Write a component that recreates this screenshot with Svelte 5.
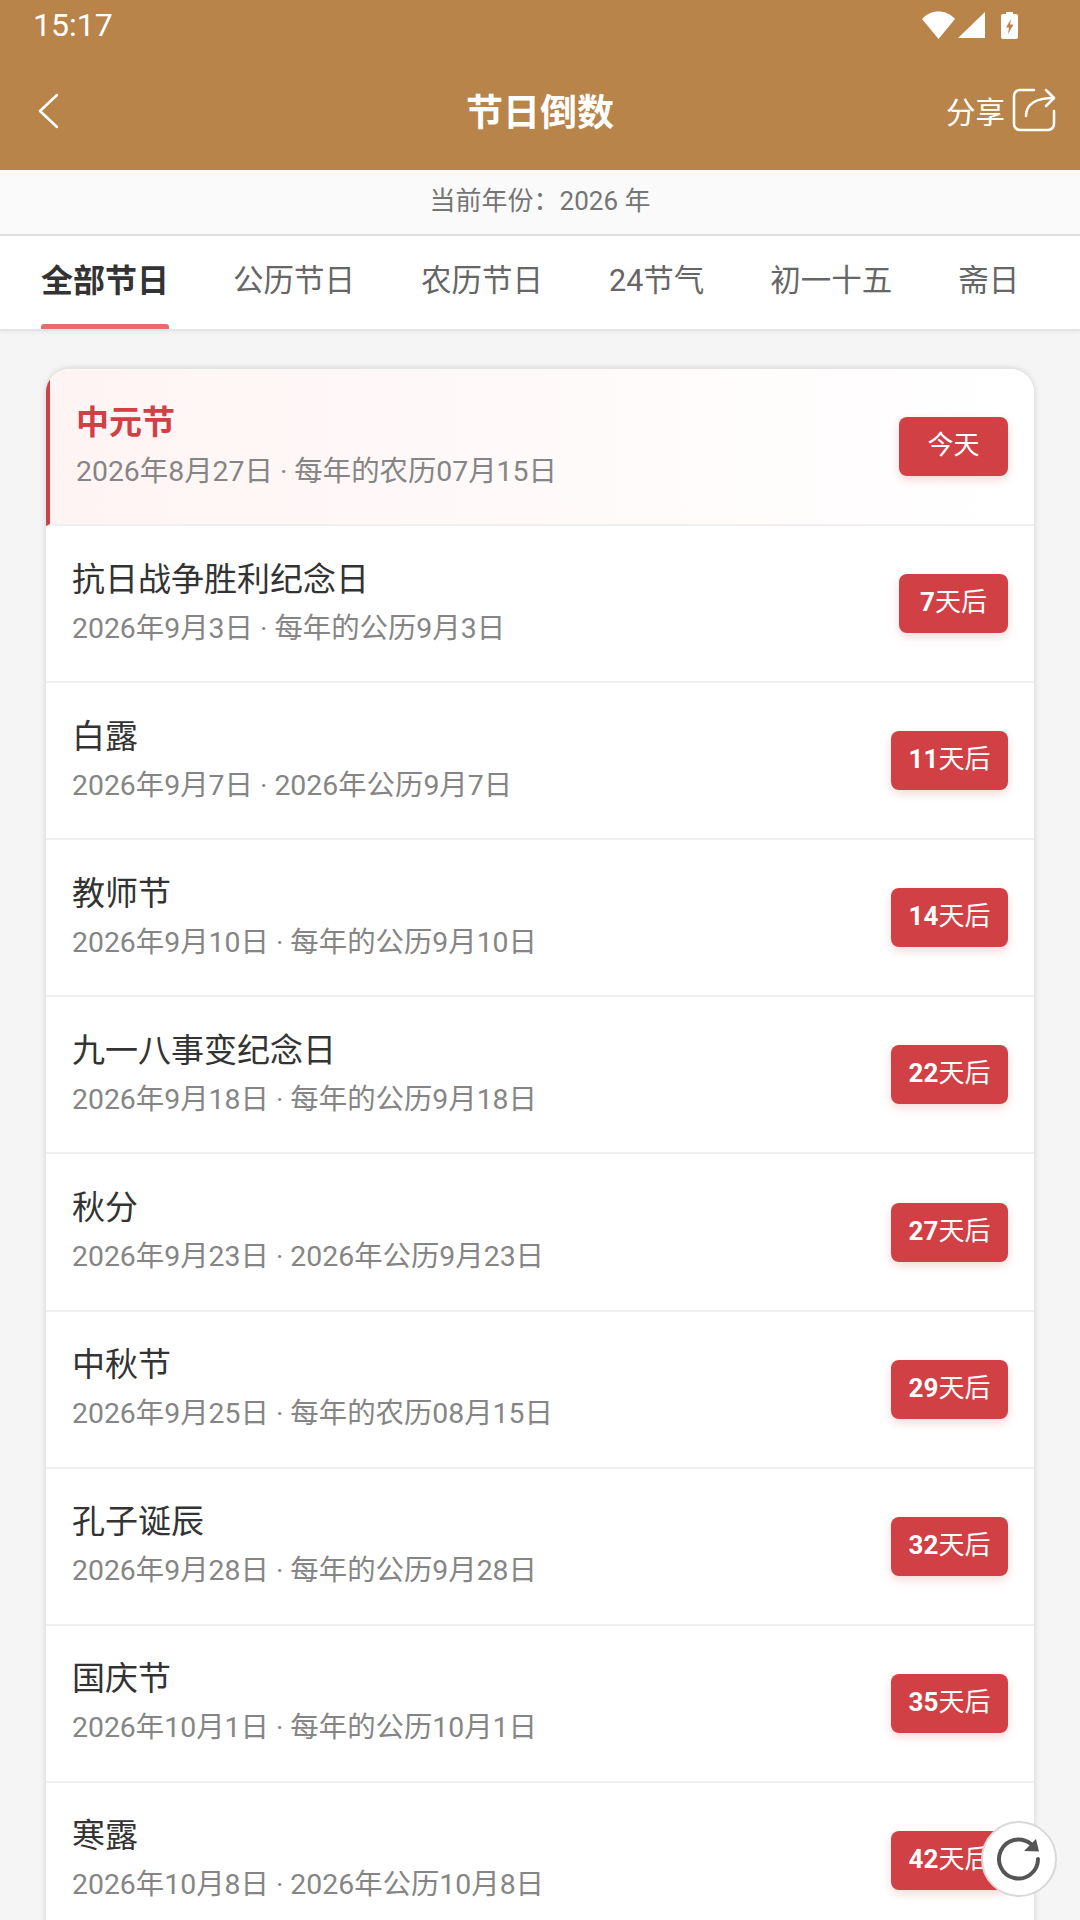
<script>
  const tabs = ['全部节日', '公历节日', '农历节日', '24节气', '初一十五', '斋日'];
  const items = [
    { name: '中元节', sub: '2026年8月27日 · 每年的农历07月15日', num: '', unit: '今天', today: true },
    { name: '抗日战争胜利纪念日', sub: '2026年9月3日 · 每年的公历9月3日', num: '7', unit: '天后' },
    { name: '白露', sub: '2026年9月7日 · 2026年公历9月7日', num: '11', unit: '天后' },
    { name: '教师节', sub: '2026年9月10日 · 每年的公历9月10日', num: '14', unit: '天后' },
    { name: '九一八事变纪念日', sub: '2026年9月18日 · 每年的公历9月18日', num: '22', unit: '天后' },
    { name: '秋分', sub: '2026年9月23日 · 2026年公历9月23日', num: '27', unit: '天后' },
    { name: '中秋节', sub: '2026年9月25日 · 每年的农历08月15日', num: '29', unit: '天后' },
    { name: '孔子诞辰', sub: '2026年9月28日 · 每年的公历9月28日', num: '32', unit: '天后' },
    { name: '国庆节', sub: '2026年10月1日 · 每年的公历10月1日', num: '35', unit: '天后' },
    { name: '寒露', sub: '2026年10月8日 · 2026年公历10月8日', num: '42', unit: '天后' }
  ];
</script>

<div class="page">
  <header class="header">
    <div class="status">
      <span class="time">15:17</span>
      <div class="status-icons">
        <svg width="33" height="28" viewBox="0 0 33 28"><path d="M0 8C4.500 3 10 .5 16.500 .5S28.500 3 33 8L16.500 28z" fill="#fff"/></svg>
        <svg width="27" height="26" viewBox="0 0 27 26"><path d="M27 0v26H0z" fill="#fff"/></svg>
        <svg width="17" height="27" viewBox="0 0 17 27">
          <path d="M5 0h7v2h3a2 2 0 0 1 2 2v21a2 2 0 0 1-2 2H2a2 2 0 0 1-2-2V4a2 2 0 0 1 2-2h3z" fill="#fff"/>
          <path d="M10 7 5 15.500h3L7 22l5.500-9.500H9z" fill="#b88449"/>
        </svg>
      </div>
    </div>
    <div class="nav">
      <svg class="back" width="22" height="36" viewBox="0 0 22 36"><path d="M20 2 3 18l17 16" fill="none" stroke="#fff" stroke-width="2.500" stroke-linecap="round" stroke-linejoin="round"/></svg>
      <h1 class="title">节日倒数</h1>
      <div class="share">
        <span>分享</span>
        <svg width="44" height="44" viewBox="0 0 44 44" fill="none" stroke="#fff" stroke-width="2.500" stroke-linecap="round" stroke-linejoin="round">
          <path d="M22 2H8a6 6 0 0 0-6 6v28a6 6 0 0 0 6 6h28a6 6 0 0 0 6-6V23"/>
          <path d="M14 28c0-11 9-18 28-18"/>
          <path d="M34 2l8 8-8 8"/>
        </svg>
      </div>
    </div>
  </header>

  <div class="year">当前年份：2026 年</div>

  <nav class="tabs">
    {#each tabs as tab, i}
      <div class="tab" class:active={i === 0}>{tab}</div>
    {/each}
  </nav>

  <main class="content">
    <div class="list">
      {#each items as item}
        <div class="row" class:today={item.today}>
          <div class="info">
            <div class="name">{item.name}</div>
            <div class="sub">{item.sub}</div>
          </div>
          <div class="badge" class:wide={item.num.length > 1}><b>{item.num}</b>{item.unit}</div>
        </div>
      {/each}
    </div>
  </main>

  <button class="refresh" aria-label="刷新">
    <svg width="46" height="46" viewBox="0 0 46 46" fill="none">
      <path d="M42 23a19.500 19.500 0 1 1-7.500-15.400" stroke="#555" stroke-width="4" stroke-linecap="round"/>
      <path d="M28 15l15 .500L40 3z" fill="#555"/>
    </svg>
  </button>
</div>

<style>
  :global(body) {
    margin: 0;
    background: #f5f5f5;
  }

  .page {
    position: relative;
    width: 1080px;
    height: 1920px;
    overflow: hidden;
    background: #f5f5f5;
    font-family: Roboto, "Noto Sans CJK SC", sans-serif;
  }

  /* Top bar */
  .header {
    height: 170px;
    background: #b88449;
    color: #fff;
  }

  .status {
    height: 50px;
    padding: 0 62px 0 33px;
    display: flex;
    align-items: center;
    justify-content: space-between;
  }

  .time {
    font-size: 32px;
    line-height: 50px;
  }

  .status-icons {
    display: flex;
    align-items: center;
    gap: 3px;
  }

  .status-icons svg:last-child {
    margin-left: 13px;
  }

  .nav {
    height: 120px;
    padding: 0 24px 0 37px;
    display: flex;
    align-items: center;
    justify-content: space-between;
    position: relative;
  }

  .back {
    margin-top: 2px;
  }

  .title {
    margin: 0;
    font-size: 37px;
    font-weight: 700;
    position: absolute;
    left: 0;
    right: 0;
    text-align: center;
  }

  .share {
    display: flex;
    align-items: center;
    gap: 7px;
    font-size: 29.500px;
  }

  .year {
    height: 64px;
    line-height: 62px;
    text-align: center;
    font-size: 26px;
    color: #757575;
    background: #fafafa;
    border-bottom: 2px solid #e0e0e0;
  }

  /* Tabs */
  .tabs {
    height: 93px;
    padding-left: 41px;
    display: flex;
    gap: 66px;
    background: #fff;
    border-bottom: 2px solid #e4e4e4;
    box-shadow: 0 2px 4px rgba(0, 0, 0, 0.04);
  }

  .tab {
    font-size: 30.500px;
    line-height: 90px;
    color: #666;
    position: relative;
    white-space: nowrap;
  }

  .tab.active {
    margin-right: -2px;
    color: #333;
    font-weight: 700;
    font-size: 32px;
  }

  .tab.active::after {
    content: '';
    position: absolute;
    left: 0;
    right: 0;
    bottom: 0;
    height: 5px;
    border-radius: 3px 3px 0 0;
    background: #e96a6c;
  }

  /* Holiday list */
  .content {
    padding: 37px 46px 0 46px;
  }

  .list {
    background: #fff;
    border-top: 1px solid #e4e4e4;
    border-radius: 24px 24px 0 0;
    box-shadow: 0 0 6px rgba(0, 0, 0, 0.14);
    overflow: hidden;
  }

  .row {
    height: 157.100px;
    box-sizing: border-box;
    padding: 0 26px;
    display: flex;
    align-items: center;
    justify-content: space-between;
    border-bottom: 2px solid #f0f0f0;
  }

  .row.today {
    border-left: 4px solid #d04044;
    background: linear-gradient(90deg, #fff4f4, #fff);
  }

  .info {
    margin-top: -2px;
  }

  .name {
    font-size: 33px;
    line-height: 44px;
    color: #333;
  }

  .today .name {
    color: #d04044;
    font-weight: 700;
  }

  .sub {
    margin-top: 8px;
    font-size: 28.400px;
    line-height: 38px;
    color: #858585;
  }

  .badge {
    width: 109px;
    height: 59px;
    line-height: 57px;
    text-align: center;
    border-radius: 8px;
    font-size: 26px;
    color: #fff;
    background: #d04044;
    box-shadow: 0 4px 10px rgba(208, 64, 68, 0.2);
  }

  .badge.wide {
    width: 117px;
  }

  .badge b {
    font-weight: 700;
  }

  .refresh {
    position: absolute;
    left: 981px;
    top: 1821px;
    width: 76px;
    height: 76px;
    padding: 0;
    box-sizing: border-box;
    border: 2px solid #d8d8d8;
    border-radius: 50%;
    background: #fff;
    display: flex;
    align-items: center;
    justify-content: center;
  }
</style>
